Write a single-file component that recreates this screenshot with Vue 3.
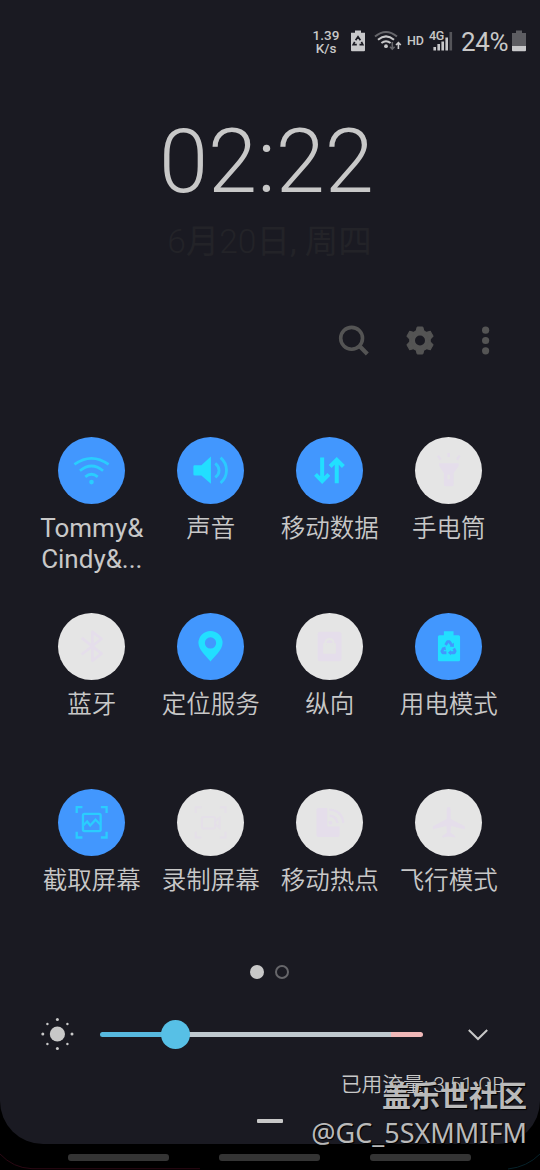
<script setup>
const tiles = [
  { id: 'wifi', label: ['Tommy&', 'Cindy&...'], on: true },
  { id: 'sound', label: ['声音'], on: true },
  { id: 'data', label: ['移动数据'], on: true },
  { id: 'torch', label: ['手电筒'], on: false },
  { id: 'bluetooth', label: ['蓝牙'], on: false },
  { id: 'location', label: ['定位服务'], on: true },
  { id: 'portrait', label: ['纵向'], on: false },
  { id: 'power', label: ['用电模式'], on: true },
  { id: 'capture', label: ['截取屏幕'], on: true },
  { id: 'record', label: ['录制屏幕'], on: false },
  { id: 'hotspot', label: ['移动热点'], on: false },
  { id: 'plane', label: ['飞行模式'], on: false }
]
</script>

<template>
  <div class="screen">
    <main class="panel">
      <header class="status">
        <div class="speed"><span>1.39</span><span>K/s</span></div>
        <svg class="s-batt" width="14" height="22" viewBox="0 0 14 22">
          <path d="M4 0.5h6v2.3h4v17.5q0 1-1 1H1q-1 0-1-1V2.8h4z" fill="#c8c8ca" />
          <g fill="none" stroke="#1a1a22" stroke-width="1.7">
            <path d="M4.6 10.2L7 6.8l2.4 3.4M10.4 11.8l1.4 2.8H8.5M5.8 14.6H2.2l1.5-2.8" />
          </g>
        </svg>
        <svg class="s-wifi" width="28" height="22" viewBox="0 0 28 22">
          <g fill="none" stroke-width="2">
            <path d="M1 6.5Q12 -2.5 23 6.5" stroke="#66666b" />
            <path d="M4 9.7Q12 3 20 9.7M7.4 13Q12 9.5 16.6 13" stroke="#c8c8ca" />
          </g>
          <circle cx="12" cy="16.2" r="1.9" fill="#c8c8ca" />
          <path d="M18.3 12v7M16 16.8l2.3 2.4 2.3-2.4" fill="none" stroke="#66666b" stroke-width="1.6" />
          <path d="M24.4 19v-6M22 15l2.4-2.4 2.4 2.4" fill="none" stroke="#c8c8ca" stroke-width="1.6" />
        </svg>
        <span class="hd">HD</span>
        <div class="signal">
          <span>4G</span>
          <svg width="20" height="19" viewBox="0 0 20 19">
            <path d="M1.7 15v3.5M5.7 12v6.5M9.7 9.5v9M13.7 5.5v13" stroke="#c8c8ca" stroke-width="2.6" />
            <path d="M17.8 0v18.5" stroke="#55555a" stroke-width="2.6" />
          </svg>
        </div>
        <span class="percent">24%</span>
        <svg class="s-level" width="14" height="22" viewBox="0 0 14 22">
          <path d="M4 0.5h6v2.5h4v13H0V3h4z" fill="#5d5d62" />
          <path d="M0 16h14v4.3q0 1-1 1H1q-1 0-1-1z" fill="#c8c8ca" />
        </svg>
      </header>

      <div class="clock">02:22</div>
      <div class="date">6<b>月</b>20<b>日</b><b>, 周四</b></div>

      <nav class="actions">
        <svg width="34" height="34" viewBox="0 0 34 34" fill="none" stroke="#545454" stroke-width="3.6">
          <circle cx="14.6" cy="15.3" r="10.9" /><path d="M22 22.6l8.3 8.3" stroke-width="4.2" />
        </svg>
        <svg width="34" height="34" viewBox="0 0 34 34">
          <g fill="#545454">
            <circle cx="17" cy="17.5" r="10.8" />
            <path v-for="a in 6" :key="a" d="M12.8 9L14.2 4h5.6l1.4 5z" :transform="`rotate(${a * 60} 17 17.5)`" stroke="#545454" stroke-width="1" stroke-linejoin="round" />
          </g>
          <circle cx="17" cy="17.5" r="5" fill="#1a1a22" />
        </svg>
        <svg width="34" height="34" viewBox="0 0 34 34" fill="#545454">
          <circle cx="16.6" cy="7.2" r="3.6" /><circle cx="16.6" cy="17.5" r="3.6" /><circle cx="16.6" cy="27.8" r="3.6" />
        </svg>
      </nav>

      <section class="tiles">
        <div v-for="t in tiles" :key="t.id" class="tile" :class="{ on: t.on }">
          <div class="disc">
            <svg viewBox="0 0 66.6 66.6" width="67" height="67">
              <g v-if="t.id === 'wifi'" class="line" stroke-width="2.7" opacity=".75">
                <path d="M16.3 27.3Q33.3 15 50.3 27.3M21.8 33.6Q33.3 24 44.8 33.6M27.1 39.6Q33.3 34.4 39.5 39.6" />
                <circle class="fill" cx="33.3" cy="44.8" r="2.3" stroke="none" />
              </g>
              <g v-else-if="t.id === 'sound'">
                <path class="fill" d="M17.5 28h6.7l9.5-8.5v27L24.2 38.2h-6.7q-1.2 0-1.2-1.2v-7.8q0-1.2 1.2-1.2z" />
                <path class="line" stroke-width="2.8" opacity=".7" d="M38 26.2Q41.8 29.2 41.8 33.2T38 40.2M43.3 20.5Q49.2 25.6 49.2 33.1T43.3 45.7" />
              </g>
              <g v-else-if="t.id === 'data'" class="line" stroke-width="4">
                <path d="M26 20.5v23M19.4 37.2l6.6 6.6 6.6-6.6M40.5 46V23M33.9 29.3l6.6-6.6 6.6 6.6" />
              </g>
              <g v-else-if="t.id === 'torch'" class="fill">
                <path fill-rule="evenodd" d="M24 26h19.4v2.8L38.4 36v11.5q0 1.5-1.5 1.5h-6.6q-1.5 0-1.5-1.5V36L24 28.8zM32.3 37.5v4.5h2.4v-4.5z" />
                <path class="line" stroke-width="2.4" d="M33.4 15.8v4.2M22.8 18.5l2.6 4M44.4 18.5l-2.6 4" />
              </g>
              <path v-else-if="t.id === 'bluetooth'" class="line" stroke-width="2.7" stroke-linejoin="round" d="M23.5 24.7L43.3 40.4 34.2 47.5V18.7L43.3 25.6 23.5 41.2" />
              <path v-else-if="t.id === 'location'" class="fill" fill-rule="evenodd" d="M33.3 48.2C30 44 21.3 36.5 21.3 29.8A12 12 0 0 1 45.3 29.8C45.3 36.5 36.6 44 33.3 48.2zM33.3 24.2a5.6 5.6 0 1 0 0 11.2a5.6 5.6 0 0 0 0-11.2z" />
              <g v-else-if="t.id === 'portrait'">
                <rect class="fill" x="21.5" y="18.7" width="23.7" height="29.2" rx="2.5" />
                <rect class="bg" x="26.9" y="29.7" width="12.8" height="10.7" rx="1" />
                <path class="bgline" d="M29.3 31v-1.2a4 4 0 0 1 8 0V31" stroke-width="2.2" />
              </g>
              <g v-else-if="t.id === 'power'">
                <path class="fill" d="M28.7 18.2h9.6V22h5q1.5 0 1.5 1.5v23q0 1.5-1.5 1.5h-19q-1.5 0-1.5-1.5v-23q0-1.5 1.5-1.5h4.4z" />
                <g class="bgline" stroke-width="2.8" stroke-linejoin="round">
                  <path d="M30.4 31.7L32.3 28.6h2l2.4 3.6M38.5 35.3l1.4 2.6-.9 1.6h-4.2M31.2 39.5h-3.6l-.9-1.6 2-3.2" />
                </g>
                <path class="bg" d="M34.4 33.2l4.2.6.1-4.2zM35.6 36.9v5.2L32.8 39.5zM26.2 35l3.9-1.7.8 4z" />
              </g>
              <g v-else-if="t.id === 'capture'" class="line" stroke-width="2.3" opacity=".75">
                <path d="M18.6 23.8V18.1h5.7M42.6 18.1h5.7v5.7M48.3 42.5v5.7h-5.7M24.3 48.2h-5.7v-5.7" />
                <rect x="24.8" y="24.8" width="17.6" height="17" rx="1.5" />
                <path d="M25 36.3l4-4 3 4 5.3-5.8 5 5" />
              </g>
              <g v-else-if="t.id === 'record'" class="line" stroke-width="2" opacity=".7">
                <path d="M18.6 23.8V18.1h5.7M42.6 18.1h5.7v5.7M48.3 42.5v5.7h-5.7M24.3 48.2h-5.7v-5.7" />
                <rect x="24.8" y="27.8" width="13" height="11.4" rx="1.5" />
                <path d="M37.8 32l4.6-3.4v9.8L37.8 35" />
              </g>
              <g v-else-if="t.id === 'hotspot'">
                <path class="fill" d="M22.3 19h8.7v18.2h12.3v8.5q0 2-2 2h-19q-2 0-2-2V21q0-2 2-2z" />
                <circle class="fill" cx="34.2" cy="33.6" r="2" />
                <path class="line" stroke-width="2.4" d="M33.4 26.6q7 .5 7.8 7.3M33.2 20.5q12.5.8 13.8 13.2" />
              </g>
              <path v-else class="fill" d="M33.5 18q2 0 2 3.3v8.5l14 7.2v3L35.8 36.8l-.5 6.6 4.6 3.4v1.4l-6.4-1-6.4 1v-1.4l4.6-3.4-.5-6.6L17.7 40v-3l13.8-7.2v-8.5q0-3.3 2-3.3z" />
            </svg>
          </div>
          <div class="label" :class="{ latin: t.id === 'wifi' }"><span v-for="l in t.label" :key="l">{{ l }}</span></div>
        </div>
      </section>

      <div class="pages"><i class="current"></i><i></i></div>

      <div class="brightness">
        <svg width="34" height="34" viewBox="0 0 34 34" fill="#c8c8c8">
          <circle cx="17.4" cy="17" r="7.6" />
          <g v-for="a in 4" :key="a" :transform="`rotate(${a * 90} 17.4 17)`">
            <circle cx="17.4" cy="2.4" r="1.5" /><circle cx="27.4" cy="7" r="1.2" />
          </g>
        </svg>
        <div class="track"><span class="used"></span><span class="rest"></span><span class="high"></span><b></b></div>
        <svg class="chev" width="22" height="14" viewBox="0 0 22 14" fill="none" stroke="#c8c8c8" stroke-width="2">
          <path d="M1.8 3l9.2 9 9.2-9" />
        </svg>
      </div>

      <div class="usage">已用流量: 3.51 GB</div>
      <div class="handle"></div>
    </main>

    <footer class="navbar"><i></i><i></i><i></i></footer>

    <svg class="edges" width="540" height="20" viewBox="0 0 540 20" fill="none">
      <path d="M0 4Q13 18 32 18.7H200" stroke="#2a0813" />
      <path d="M540 4Q527 17 508 19" stroke="#06222a" />
    </svg>

    <div class="watermark">
      <strong>盖乐世社区</strong>
      <span>@GC_5SXMMIFM</span>
    </div>
  </div>
</template>

<style>
body { background: #000; }
</style>

<style scoped>
.screen { position: relative; width: 540px; height: 1170px; overflow: hidden; background: #000; color: #c8c8c8; font-family: Roboto, "Noto Sans CJK SC", sans-serif; }
.panel { display: flex; flex-direction: column; height: 1144px; background: #1a1a22; border-radius: 0 0 43px 43px; overflow: hidden; }
.status { display: flex; align-items: center; height: 82px; flex: none; padding-left: 312px; box-sizing: border-box; white-space: nowrap; }
.speed { display: flex; flex-direction: column; width: 28px; margin-right: 11px; padding-top: 1px; font-size: 13.5px; line-height: 12.5px; font-weight: 500; text-align: center; flex: none; }
.status svg { flex: none; }
.s-wifi { margin-left: 9px; }
.hd { font-size: 12.5px; font-weight: 500; margin-left: 5px; width: 20px; line-height: 12px; }
.signal { position: relative; width: 24px; height: 22px; margin-left: 2px; }
.signal span { position: absolute; left: 0; top: 0; font-size: 12.5px; line-height: 12px; font-weight: 500; z-index: 1; letter-spacing: -.3px; }
.signal svg { position: absolute; right: 0; top: 2px; }
.percent { font-size: 26px; width: 50px; margin-left: 8px; padding-top: 2px; letter-spacing: -.4px; line-height: 30px; }
.s-level { margin-left: 1px; }
.clock { height: 106px; margin-top: 27px; flex: none; line-height: 106px; font-size: 88.5px; font-weight: 300; text-align: center; padding-right: 7px; }
.date { height: 48px; flex: none; line-height: 48px; margin-top: 3px; text-align: center; font-size: 33.5px; font-weight: 300; color: #232328; white-space: nowrap; padding-right: 1px; }
.date b { font-weight: 400; }
.actions { display: flex; justify-content: flex-end; gap: 32px; margin-top: 57px; height: 34px; padding-right: 37px; flex: none; }
.tiles { display: grid; grid-template-columns: repeat(4, 119px); grid-auto-rows: 176px; margin: 79.5px 0 0 32.3px; flex: none; }
.tile { display: flex; flex-direction: column; align-items: center; --disc: #e5e5e5; --ink: #e5deeb; }
.tile.on { --disc: #4297fe; --ink: #22dfff; }
.disc { width: 67px; height: 67px; border-radius: 50%; background: var(--disc); }
.disc svg { display: block; }
.fill { fill: var(--ink); }
.line { fill: none; stroke: var(--ink); }
.bg { fill: var(--disc); }
.bgline { fill: none; stroke: var(--disc); }
.label { display: flex; flex-direction: column; align-items: center; margin-top: 9px; font-size: 24.5px; line-height: 31px; font-weight: 350; white-space: nowrap; }
.label.latin { font-size: 26px; font-weight: 400; }
.pages { display: flex; gap: 11px; justify-content: center; height: 14px; padding-right: 1px; margin-top: .5px; flex: none; }
.pages i { width: 14px; height: 14px; box-sizing: border-box; border: 2.5px solid #66666a; border-radius: 50%; }
.pages .current { background: #c8c8c8; border: 0; }
.brightness { display: flex; align-items: center; height: 34px; flex: none; margin: 38px 0 0 40px; }
.track { position: relative; display: flex; width: 323px; height: 5px; margin-left: 26px; border-radius: 3px; }
.track .used { width: 76px; background: #57b9df; border-radius: 3px 0 0 3px; }
.track .rest { flex: 1; background: #bfc8ce; }
.track .high { width: 32px; background: #f0b8b8; border-radius: 0 3px 3px 0; }
.track b { position: absolute; left: 61px; top: -12px; width: 29px; height: 29px; border-radius: 50%; background: #57c0e6; }
.chev { margin-left: 44px; }
.usage { height: 28px; line-height: 28px; margin-top: 20px; padding-right: 35px; text-align: right; font-size: 20.8px; font-weight: 350; flex: none; }
.handle { width: 26px; height: 4px; flex: none; margin: 20px auto 0; background: #c8c8c8; border-radius: 1px; }
.navbar { display: flex; gap: 50px; justify-content: center; height: 26px; padding: 10px 2px 0 0; box-sizing: border-box; }
.navbar i { width: 101px; height: 7px; border-radius: 3px; background: #343434; }
.edges { position: absolute; left: 0; bottom: 0; }
.watermark { position: absolute; right: 13px; top: 1075px; display: flex; flex-direction: column; align-items: flex-end; color: #bababa; text-shadow: 1px 1px 1px #000; white-space: nowrap; }
.watermark strong { font: 700 29px/38px "Noto Sans CJK SC", sans-serif; }
.watermark span { font: 400 27px/40px "Noto Sans", sans-serif; }
</style>
